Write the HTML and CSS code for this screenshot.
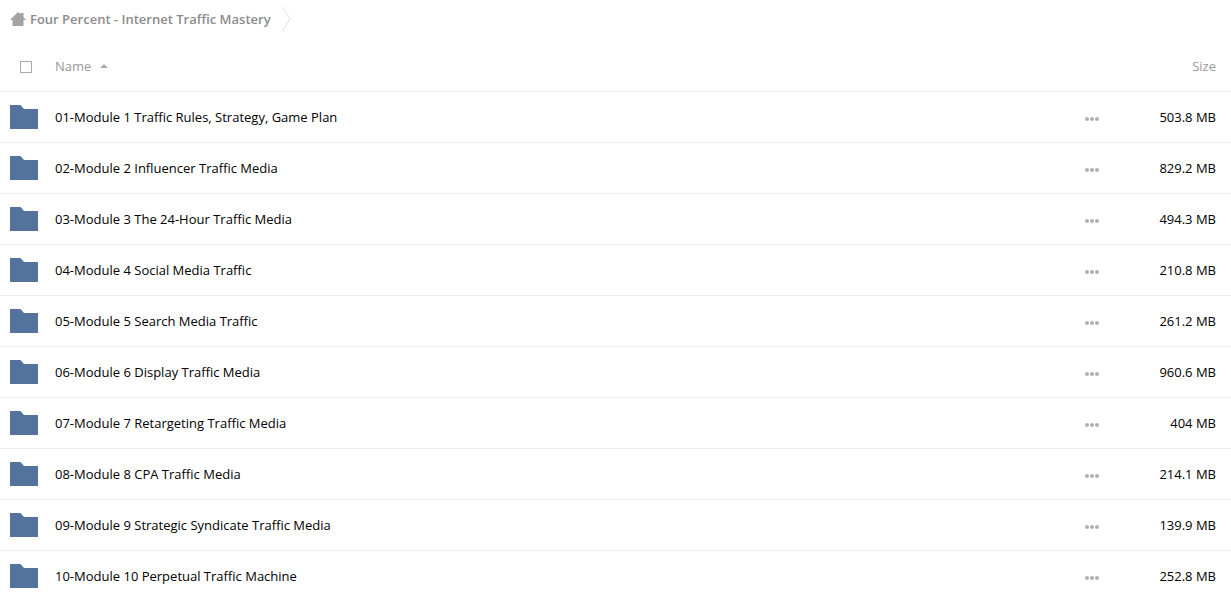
FILE: index.html
```
<!DOCTYPE html>
<html lang="en">

<head>
    <meta charset="UTF-8">
    <title>Four Percent - Internet Traffic Mastery</title>
    <link rel="stylesheet" href="styles.css">
</head>

<body>
    <svg class="sprite" aria-hidden="true">
        <symbol id="icon-folder" viewBox="0 0 28 24">
            <path d="M.5 0H10.500L14 4h13.500q.5 0 .5.5v19q0 .5-.5.5H.5q-.5 0-.5-.5V.5Q0 0 .5 0z" />
        </symbol>
        <symbol id="icon-more" viewBox="0 0 14 4">
            <circle cx="2" cy="2" r="2" />
            <circle cx="7" cy="2" r="2" />
            <circle cx="12" cy="2" r="2" />
        </symbol>
    </svg>

    <nav class="breadcrumb" aria-label="Breadcrumb">
        <a href="#" class="crumb">
            <svg class="home" viewBox="0 0 16 14" aria-hidden="true">
                <path d="M8 0l2.500 2V1h3v4L16 8h-2.500v6h-11V8H0z" />
            </svg>
            <span>Four Percent - Internet Traffic Mastery</span>
        </a>
        <svg class="separator" viewBox="0 0 9 26" aria-hidden="true">
            <path d="M.5 1l7.500 12L.5 25" />
        </svg>
    </nav>

    <table class="files">
        <thead>
            <tr>
                <th class="icon-cell"><input type="checkbox" class="select-all" aria-label="Select all"></th>
                <th class="name">
                    <button type="button" class="sort">Name <span class="arrow"></span></button>
                </th>
                <th class="actions"></th>
                <th class="size">Size</th>
            </tr>
        </thead>
        <tbody id="file-list"></tbody>
    </table>

    <script src="script.js"></script>
</body>

</html>
```

FILE: styles.css
```
* {
    box-sizing: border-box;
}

body {
    margin: 0;
    background: #fff;
    color: #000;
    font-family: "Open Sans", sans-serif;
    font-size: 13px;
    line-height: 20px;
}

a {
    color: inherit;
    text-decoration: none;
}

button {
    padding: 0;
    border: none;
    background: none;
    color: inherit;
    font: inherit;
    cursor: pointer;
}

.sprite {
    display: none;
}

.breadcrumb {
    display: flex;
    align-items: center;
    gap: 11px;
    height: 41px;
    padding: 0 10px 3px;
    color: #8c8c8c;
    font-weight: 600;
}

.crumb {
    display: flex;
    align-items: center;
    gap: 4px;
}

.home {
    width: 16px;
    height: 14px;
    fill: #a3a3a3;
}

.separator {
    width: 9px;
    height: 26px;
    fill: none;
    stroke: #e2e2e2;
}

.files {
    width: 100%;
    border-collapse: separate;
    border-spacing: 0;
    table-layout: fixed;
}

.files th,
.files td {
    height: 51px;
    padding: 0;
    border-bottom: 1px solid #eee;
    text-align: left;
    vertical-align: middle;
}

.files tbody tr:last-child td {
    height: 50px;
    border-bottom: none;
}

.files th {
    color: #999;
    font-weight: 400;
}

.files .icon-cell {
    width: 55px;
    padding-left: 10px;
}

.select-all {
    display: block;
    appearance: none;
    width: 12px;
    height: 12px;
    margin: 2px 10px 0;
    border: 1px solid #aaa;
    background: #fff;
}

.select-all:checked {
    background: #54739c;
}

.sort {
    display: flex;
    align-items: center;
    gap: 9px;
}

.arrow {
    border: 4px solid transparent;
    border-top: none;
    border-bottom-color: #aaa;
}

.folder {
    display: block;
    width: 28px;
    height: 24px;
    fill: #54739c;
}

.files .actions {
    width: 46px;
}

.more {
    display: block;
    padding: 8px 0 4px;
}

.more svg {
    display: block;
    width: 14px;
    height: 4px;
    fill: #b0b0b0;
}

.files .size {
    width: 100px;
    padding-right: 15px;
    text-align: right;
}
```

FILE: script.js
```
const folders = [
    ["01-Module 1 Traffic Rules, Strategy, Game Plan", "503.8 MB"],
    ["02-Module 2 Influencer Traffic Media", "829.2 MB"],
    ["03-Module 3 The 24-Hour Traffic Media", "494.3 MB"],
    ["04-Module 4 Social Media Traffic", "210.8 MB"],
    ["05-Module 5 Search Media Traffic", "261.2 MB"],
    ["06-Module 6 Display Traffic Media", "960.6 MB"],
    ["07-Module 7 Retargeting Traffic Media", "404 MB"],
    ["08-Module 8 CPA Traffic Media", "214.1 MB"],
    ["09-Module 9 Strategic Syndicate Traffic Media", "139.9 MB"],
    ["10-Module 10 Perpetual Traffic Machine", "252.8 MB"]
];

document.getElementById("file-list").innerHTML = folders.map(([name, size]) => `
    <tr>
        <td class="icon-cell"><svg class="folder" aria-hidden="true"><use href="#icon-folder"/></svg></td>
        <td class="name"><a href="#">${name}</a></td>
        <td class="actions">
            <button type="button" class="more" aria-label="More actions"><svg><use href="#icon-more"/></svg></button>
        </td>
        <td class="size">${size}</td>
    </tr>`).join("");
```
